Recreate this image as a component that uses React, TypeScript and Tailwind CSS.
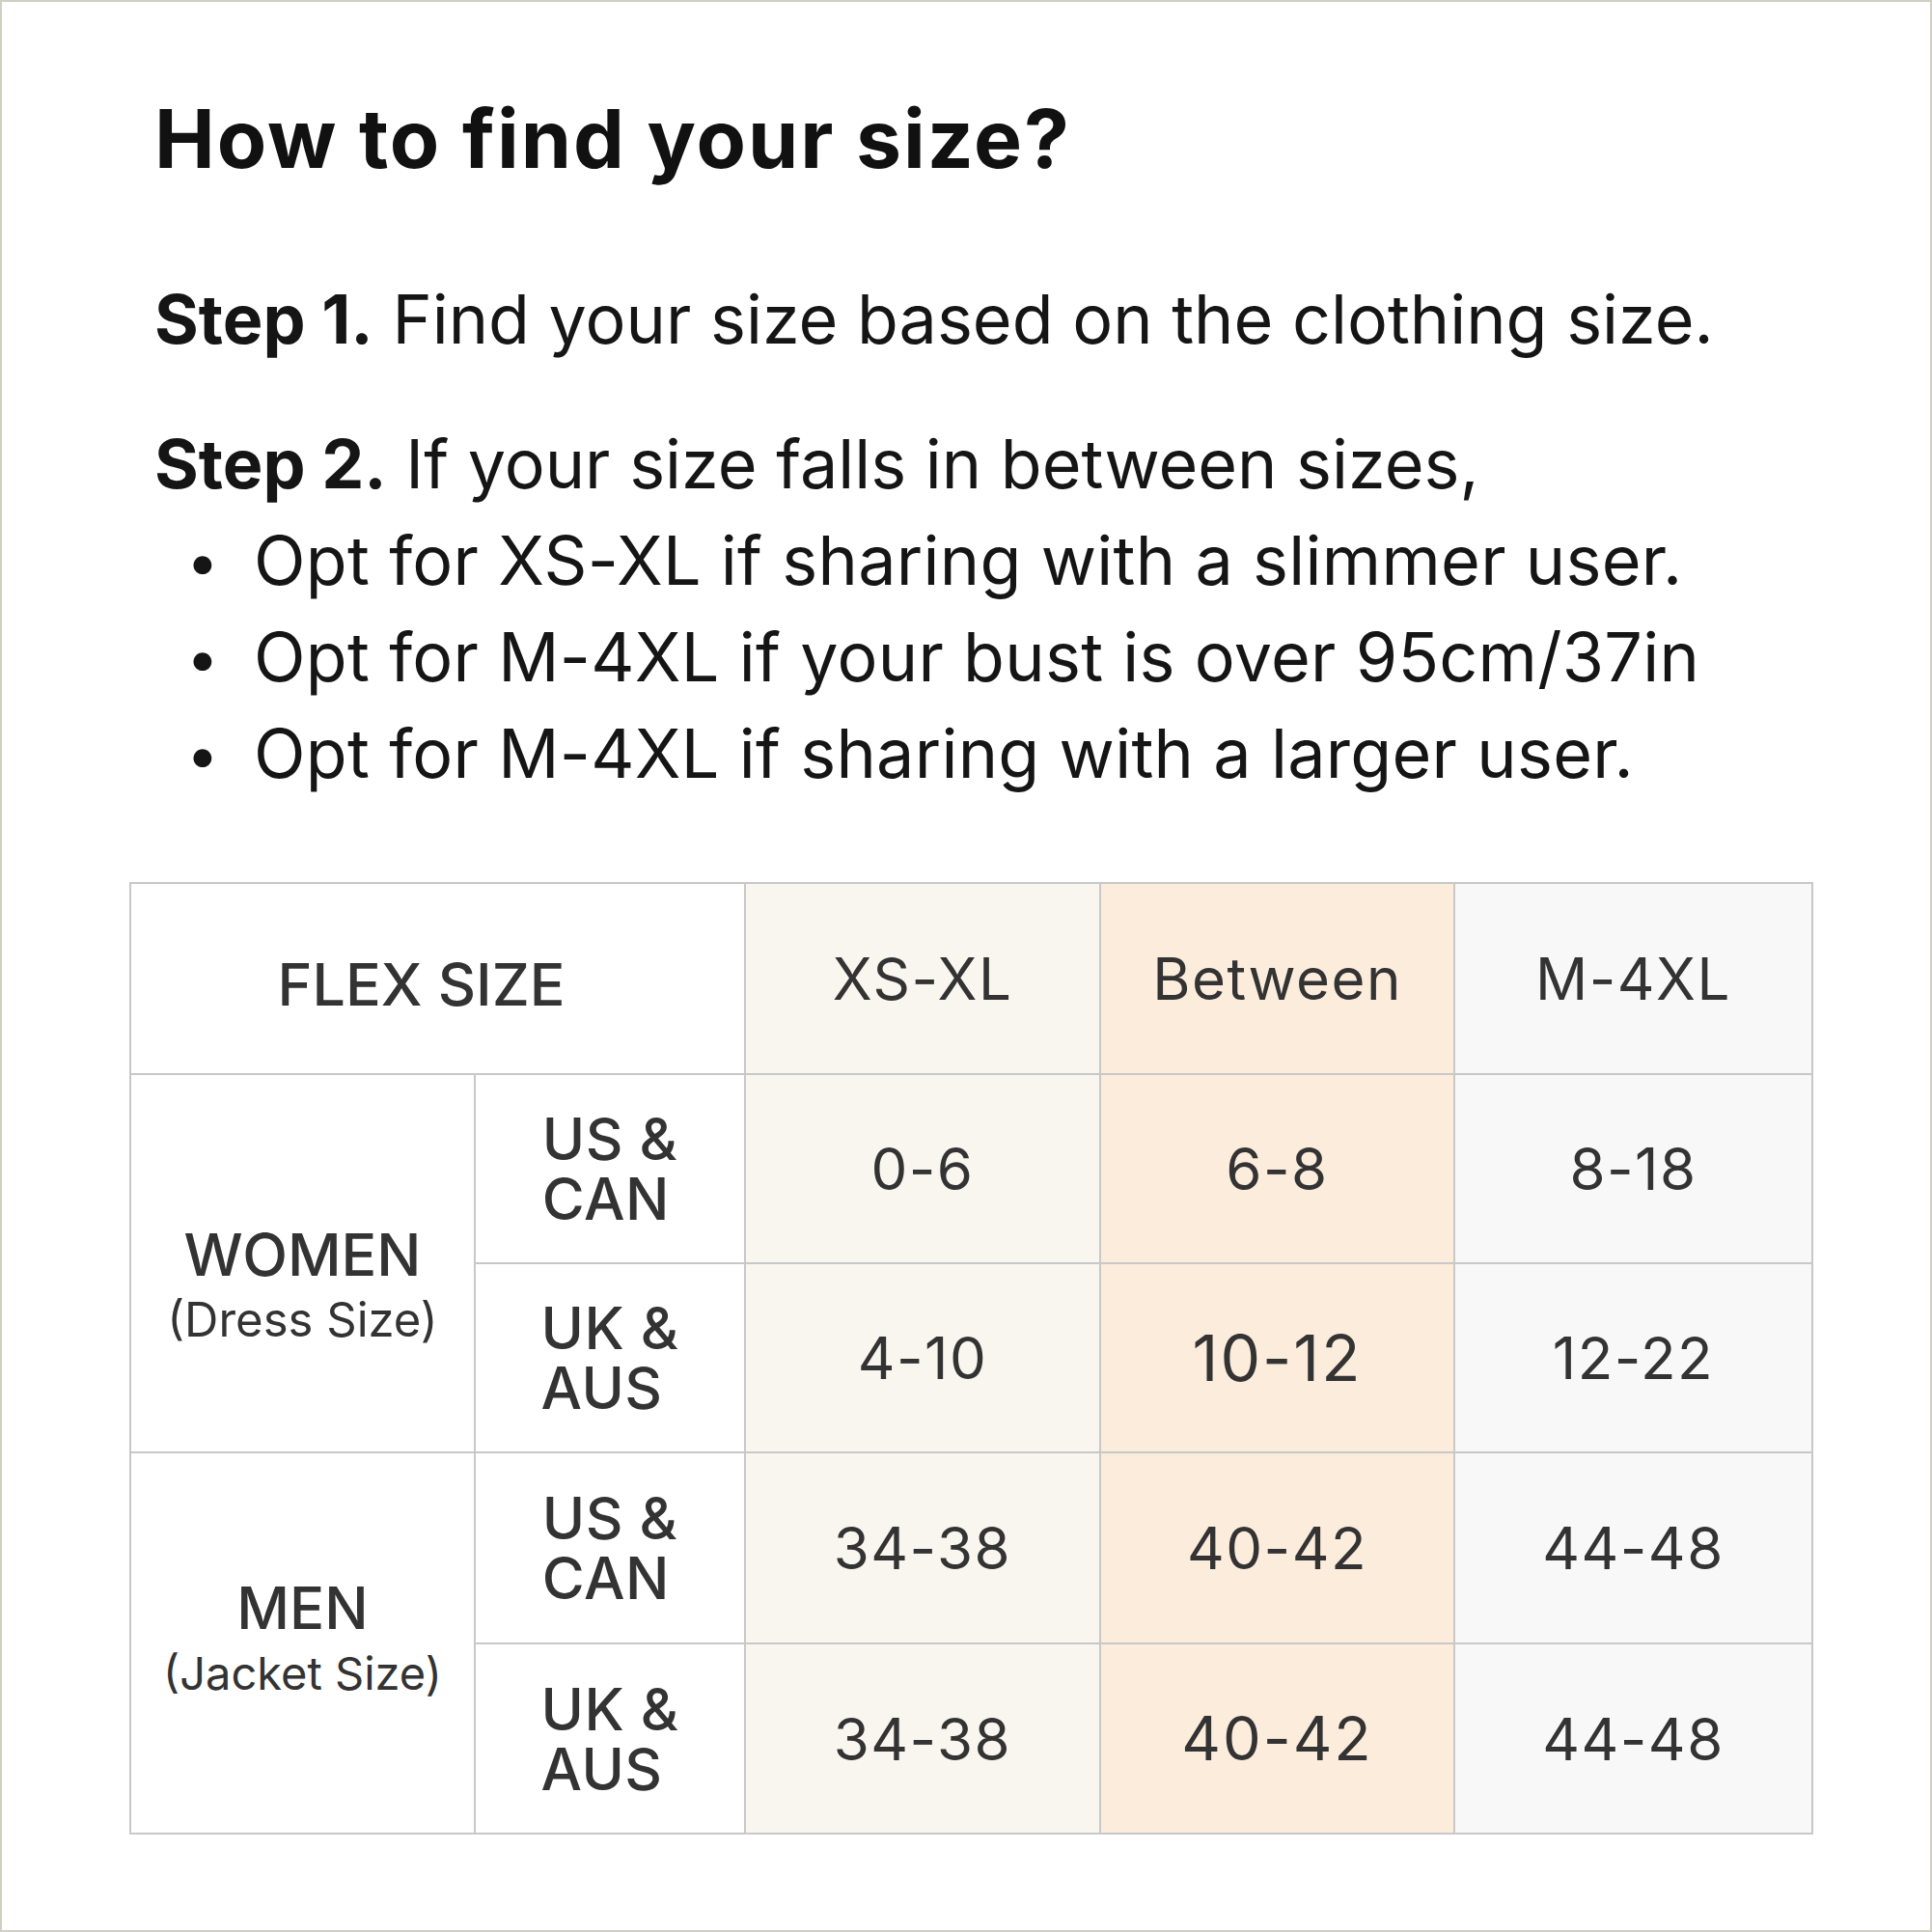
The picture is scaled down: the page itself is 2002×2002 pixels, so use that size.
import React from "react";

const font = { fontFamily: "Inter, Lato, 'Noto Sans', sans-serif" };

function Cell({ children, className = "" }: { children?: React.ReactNode; className?: string }) {
  return (
    <div className={"flex flex-col items-center justify-center text-center text-[#333333] " + className}>
      {children}
    </div>
  );
}

function Region({ text }: { text: string }) {
  return (
    <Cell className="bg-white text-[60px] leading-[62px] font-medium tracking-[0.5px]">
      <div className="text-left whitespace-pre-line">{text}</div>
    </Cell>
  );
}

const c1 = "bg-[#f9f5ef] text-[60px] tracking-[1.5px]";
const c2 = "bg-[#fcecdc] text-[60px] tracking-[1.5px]";
const c3 = "bg-[#f8f8f8] text-[60px] tracking-[1.5px]";

export default function App() {
  return (
    <div className="w-[2002px] h-[2002px] bg-white border-2 border-[#cfd0c2] box-border" style={font}>
      <div className="pl-[158px] pt-[100px]">
        <h1 className="text-[84px] leading-none font-bold text-[#111111] tracking-[1.9px]">How to find your size?</h1>
        <div className="mt-[110px] text-[70px] leading-none text-[#151515]">
          <span className="font-bold">Step 1.</span> Find your size based on the clothing size.
        </div>
        <div className="mt-[80px] text-[70px] leading-none text-[#151515]">
          <span className="font-bold">Step 2.</span> If your size falls in between sizes,
        </div>
        <div className="mt-[30px] flex flex-col gap-[30px] text-[70px] leading-none text-[#151515] tracking-[0.3px]">
          {[
            "Opt for XS-XL if sharing with a slimmer user.",
            "Opt for M-4XL if your bust is over 95cm/37in",
            "Opt for M-4XL if sharing with a larger user.",
          ].map((t) => (
            <div key={t} className="flex items-center">
              <span className="w-[100px] text-center text-[60px] leading-none">•</span>
              <span className="pl-[3px]">{t}</span>
            </div>
          ))}
        </div>
      </div>
      <div className="ml-[132px] mt-[98px] w-[1745px] grid grid-cols-[355px_278px_366px_365px_369px] grid-rows-[196px_194px_194px_196px_195px] gap-[2px] p-[2px] bg-[#c8c8c8]">
        <Cell className="col-span-2 bg-white text-[61px] font-medium pr-[34px] pt-[14px]">FLEX SIZE</Cell>
        <Cell className={c1}>XS-XL</Cell>
        <Cell className={c2}>Between</Cell>
        <Cell className={c3}>M-4XL</Cell>

        <Cell className="row-span-2 bg-white pt-[46px]">
          <span className="text-[61px] leading-[72px] font-medium">WOMEN</span>
          <span className="text-[49px] leading-[64px]">(Dress Size)</span>
        </Cell>
        <Region text={"US &\nCAN"} />
        <Cell className={c1}>0-6</Cell>
        <Cell className={c2}>6-8</Cell>
        <Cell className={c3}>8-18</Cell>

        <Region text={"UK &\nAUS"} />
        <Cell className={c1}>4-10</Cell>
        <Cell className="bg-[#fcecdc] text-[66px] tracking-[2px]">10-12</Cell>
        <Cell className={c3}>12-22</Cell>

        <Cell className="row-span-2 bg-white pb-[9px]">
          <span className="text-[60px] leading-[72px] font-medium">MEN</span>
          <span className="text-[47px] leading-[64px]">(Jacket Size)</span>
        </Cell>
        <Region text={"US &\nCAN"} />
        <Cell className={c1}>34-38</Cell>
        <Cell className={c2}>40-42</Cell>
        <Cell className={c3}>44-48</Cell>

        <Region text={"UK &\nAUS"} />
        <Cell className={c1}>34-38</Cell>
        <Cell className="bg-[#fcecdc] text-[63px] tracking-[2px]">40-42</Cell>
        <Cell className={c3}>44-48</Cell>
      </div>
    </div>
  );
}
